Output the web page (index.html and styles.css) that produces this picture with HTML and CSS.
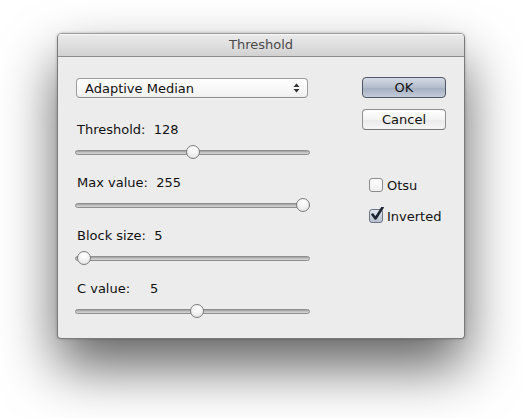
FILE: index.html
```html
<!DOCTYPE html>
<html lang="en">
<head>
  <meta charset="UTF-8">
  <title>Threshold</title>
  <link rel="stylesheet" href="styles.css">
</head>
<body>
  <div class="window">
    <div class="titlebar">Threshold</div>

    <div class="content">
      <div class="left">
        <div class="popup">
          <span>Adaptive Median</span>
          <svg class="arrows" width="7" height="10" viewBox="0 0 7 10">
            <path d="M3.5 0.5 L6.5 4 L0.5 4 Z" fill="#333"/>
            <path d="M3.5 9.5 L6.5 6 L0.5 6 Z" fill="#333"/>
          </svg>
        </div>

        <div class="group first">
          <div class="label">Threshold:&nbsp; 128</div>
          <div class="slider"><div class="track"></div><div class="thumb" style="left: 50.2%"></div></div>
        </div>

        <div class="group">
          <div class="label">Max value:&nbsp; 255</div>
          <div class="slider"><div class="track"></div><div class="thumb" style="left: 100%"></div></div>
        </div>

        <div class="group">
          <div class="label">Block size:&nbsp; 5</div>
          <div class="slider"><div class="track"></div><div class="thumb" style="left: 0%"></div></div>
        </div>

        <div class="group">
          <div class="label"><span class="cname">C value:</span>5</div>
          <div class="slider"><div class="track"></div><div class="thumb" style="left: 51.5%"></div></div>
        </div>
      </div>

      <div class="right">
        <button class="btn default">OK</button>
        <button class="btn">Cancel</button>

        <div class="checks">
          <label class="check"><span class="box"></span>Otsu</label>
          <label class="check"><span class="box on">
            <svg width="16" height="16" viewBox="0 0 16 16">
              <path d="M3.5 7.5 L6.5 11.5 L13.5 0.5" fill="none" stroke="#1c2433" stroke-width="2.6" stroke-linecap="round" stroke-linejoin="round"/>
            </svg>
          </span>Inverted</label>
        </div>
      </div>
    </div>
  </div>
</body>
</html>
```

FILE: styles.css
```css
* { margin: 0; padding: 0; box-sizing: border-box; }
body {
  font-family: "DejaVu Sans", "Liberation Sans", sans-serif;
  font-size: 13px;
  color: #111;
  background: white;
  width: 522px;
  height: 418px;
  overflow: hidden;
}

.window {
  margin: 33px 0 0 57px;
  width: 408px;
  height: 306px;
  background: #ececec;
  border: 1px solid #7a7a7a;
  border-top-color: #9a9a9a;
  border-radius: 5px 5px 4px 4px;
  box-shadow: 0 28px 55px rgba(0, 0, 0, 0.62), 0 0 3px rgba(0, 0, 0, 0.25);
  overflow: hidden;
}

.titlebar {
  height: 23px;
  line-height: 22px;
  text-align: center;
  color: #4a4a4a;
  background: linear-gradient(#ebebeb, #d2d2d2);
  border-bottom: 1px solid #8c8c8c;
  box-shadow: inset 0 1px 0 #f8f8f8;
}

.content {
  display: flex;
  padding: 21px 0 0 18px;
}

.left { width: 235px; }

.popup {
  display: flex;
  align-items: center;
  justify-content: space-between;
  width: 232px;
  height: 20px;
  padding: 0 7px 0 8px;
  background: linear-gradient(#ffffff, #f1f1f1);
  border: 1px solid #9d9d9d;
  border-bottom-color: #8a8a8a;
  border-radius: 4px;
  box-shadow: 0 1px 0 rgba(255, 255, 255, 0.6);
}

.group { margin-top: 16px; }
.group.first { margin-top: 24px; }

.label {
  line-height: 16px;
  padding-left: 1px;
}

.cname {
  display: inline-block;
  width: 73px;
}

.slider {
  position: relative;
  height: 14px;
  margin: 7px 0 0 -1px;
  width: 235px;
  display: flex;
  align-items: center;
}

.track {
  width: 100%;
  height: 5px;
  border-radius: 3px;
  background: linear-gradient(#9c9c9c, #c9c9c9 60%, #d6d6d6);
  border: 1px solid #8e8e8e;
}

/* thumb travels between 9px and 226px of the track */
.thumb {
  position: absolute;
  top: 0;
  width: 14px;
  height: 14px;
  transform: translateX(-50%);
  border-radius: 50%;
  border: 1px solid #7d7d7d;
  background: radial-gradient(circle at 50% 30%, #ffffff, #f2f2f2 50%, #d9d9d9);
}
.thumb[style="left: 50.2%"] { margin-left: 0; }
.thumb[style="left: 51.5%"] { margin-left: 1px; }
.thumb[style="left: 0%"] { margin-left: 9px; }
.thumb[style="left: 100%"] { margin-left: -7px; }

.right {
  margin-left: 51px;
  width: 84px;
}

.btn {
  display: block;
  width: 84px;
  height: 21px;
  font-family: inherit;
  font-size: 13px;
  color: #111;
  border-radius: 4px;
  border: 1px solid #8f8f8f;
  border-bottom-color: #777;
  background: linear-gradient(#ffffff, #f3f3f3 50%, #e9e9e9 51%, #f6f6f6);
}
.btn + .btn { margin-top: 11px; }

.btn.default {
  margin-top: -1px;
  border-color: #4f5868;
  background: linear-gradient(#d5dbe5, #b3bccb 50%, #a3aebf 51%, #c4ccd8);
}

.checks {
  margin: 47px 0 0 7px;
  display: flex;
  flex-direction: column;
  gap: 15px;
}

.check {
  display: flex;
  align-items: center;
  height: 16px;
  gap: 4px;
}

.box {
  position: relative;
  width: 14px;
  height: 14px;
  border: 1px solid #8c8c8c;
  border-radius: 3px;
  background: linear-gradient(#ffffff, #eeeeee);
}

.box.on {
  border-color: #6b7384;
  background: linear-gradient(#e2e7ef, #b7c0cf);
}

.box svg {
  position: absolute;
  left: -1px;
  top: -3px;
}
```
